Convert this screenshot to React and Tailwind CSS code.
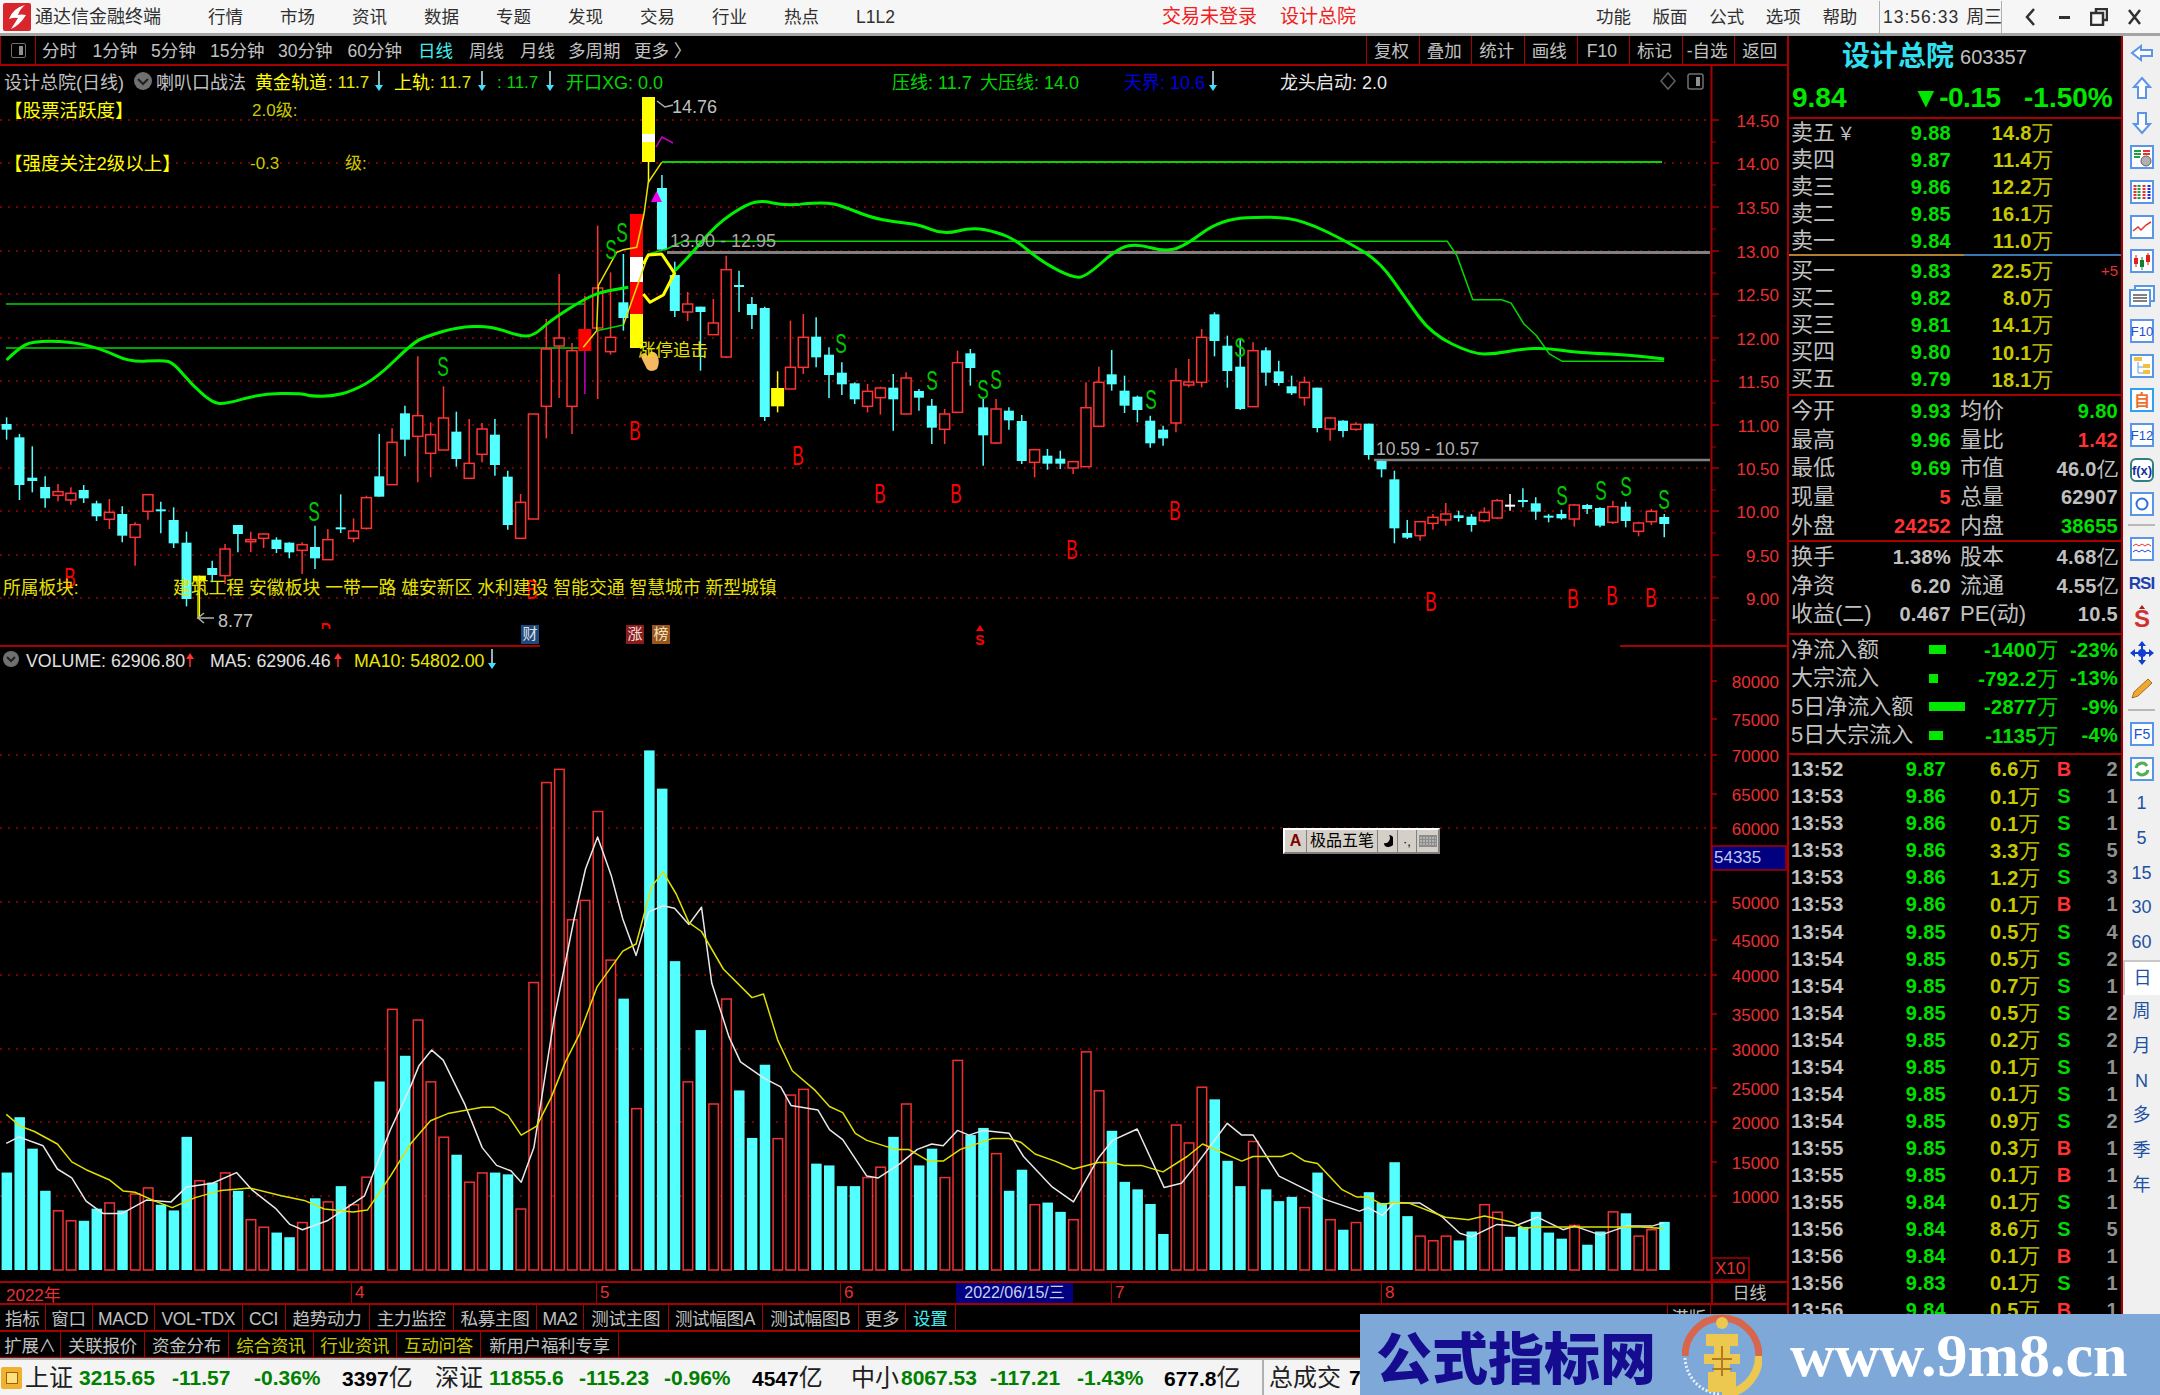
import React from 'react';

// candles: [type, high, top, bottom, low], y in crop units (page y = 200 + v / 3)
const CANDLES = [
  ['c',655,675,692,722],['c',705,715,858,903],['c',742,836,846,880],['c',832,864,898,926],['r',855,878,889,907],
  ['r',865,883,903,917],['c',858,873,898,912],['c',905,913,952,966],['r',900,940,961,990],['c',922,945,1010,1030],
  ['r',970,977,1015,1100],['r',887,887,937,962],['c',908,931,935,1003],['c',925,963,1033,1047],['c',998,1031,1200,1222],
  ['y',1130,1130,1145,1260],['c',1085,1107,1128,1150],['r',1035,1050,1130,1155],['c',978,978,1005,1060],['r',998,1022,1028,1060],
  ['r',1003,1005,1018,1047],['c',1015,1022,1050,1062],['c',1030,1031,1060,1078],['r',1030,1037,1054,1125],['c',980,1044,1078,1110],
  ['r',990,1022,1082,1082],['c',886,985,988,1002],['r',958,996,1018,1030],['r',890,896,988,992],['c',705,832,893,893],
  ['r',688,730,857,857],['c',620,643,722,772],['r',472,650,712,850],['r',670,707,763,835],['r',562,657,753,753],
  ['c',638,698,780,803],['r',660,793,838,838],['r',672,690,766,790],['c',660,707,798,830],['c',815,833,978,992],
  ['r',885,910,1018,1018],['r',645,645,960,960],['r',360,450,622,718],['r',225,417,441,597],['r',432,455,622,705],
  ['f',290,390,456,456],['r',80,267,387,600],['r',220,415,458,467],['c',165,310,357,395],null,
  null,['c',-72,-33,152,152],['c',188,228,336,354],['r',279,315,339,366],['c',323,323,339,515],
  ['r',300,372,407,407],['r',170,212,474,477],['c',215,258,263,339],['c',294,315,348,390],['c',323,327,654,666],
  ['y',517,567,622,640],['r',365,505,570,570],['r',345,415,505,525],['c',355,413,475,505],['c',445,467,528,597],
  ['c',490,521,556,588],['c',550,553,601,615],['r',555,577,622,640],['r',563,567,596,647],['c',525,566,601,695],
  ['r',520,537,645,645],['c',570,576,596,635],['c',600,620,686,735],['r',630,645,691,735],['r',455,491,640,640],
  ['c',450,463,507,560],['c',600,625,709,800],['r',600,630,732,735],['c',625,635,664,692],['c',648,666,786,795],
  ['r',750,752,790,835],['c',750,770,794,812],['c',755,779,794,810],['r',785,788,807,825],['r',550,626,803,803],
  ['r',503,550,682,685],['c',453,526,556,575],['c',530,575,620,642],['c',590,593,633,670],['c',650,665,733,746],
  ['c',680,692,718,740],['r',508,545,672,700],['r',480,549,558,565],['r',390,415,550,565],['c',340,346,426,472],
  ['c',410,440,516,566],['c',420,503,630,633],['r',430,455,623,623],['c',445,454,521,560],['c',485,517,552,560],
  ['c',530,562,583,588],['r',533,550,596,620],['c',566,566,687,700],['r',655,657,690,725],['c',664,665,696,715],
  ['r',670,676,691,695],['c',674,674,768,782],['c',785,786,811,835],['c',815,841,988,1033],['c',963,1002,1016,1020],
  ['r',968,968,1010,1025],['r',945,955,973,992],['r',912,945,963,980],['c',935,949,957,968],['c',945,953,978,998],
  ['r',925,940,965,970],['r',900,905,957,960],['w',885,917,921,935],['c',868,903,908,925],['c',895,913,938,962],
  ['c',945,950,953,970],['c',932,945,958,962],['r',915,918,960,983],['c',915,918,930,945],['c',925,927,980,985],
  ['r',905,923,970,975],['c',908,923,966,985],['r',968,972,997,1012],['r',930,937,968,978],['c',945,954,975,1015],
];

// volume bars: [type, top] with page y = 720 + v / 2.8
const VOLS = 'c1270 c1115 c1203 c1321 r1377 r1405 c1405 c1371 r1355 c1376 r1330 r1313 c1360 c1376 c1170 r1293 c1298 r1271 c1321 r1402 r1423 c1438 c1451 r1410 c1342 r1352 c1308 r1360 r1283 c1015 r813 c943 r843 r1016 r1171 c1220 r1297 r1271 c1270 c1275 r1372 r738 r178 r141 r562 r508 r259 r675 c783 r1091 c88 c195 c678 r1016 c871 r1078 r784 c1040 c1173 c968 r1175 r1053 r1037 c1245 c1250 c1308 c1308 r1284 r1255 c1170 r1078 c1250 c1203 r1284 r956 c1165 c1145 r1217 c1321 c1262 r1360 c1354 c1380 r1402 r932 r1041 c1153 c1296 c1317 c1358 c1442 r1137 r1187 r1031 c1065 c1237 c1308 r1183 c1317 c1350 c1338 r1368 c1270 r1402 c1430 r1410 c1325 c1355 c1241 c1392 r1448 r1461 r1448 c1460 c1435 r1360 r1381 c1450 c1422 c1380 c1438 c1455 r1418 c1472 c1435 r1380 c1384 r1448 r1430 c1408'.split(' ');

const MA5 = [[11,1188],[33,1170],[75,1195],[100,1260],[125,1285],[150,1350],[180,1385],[212,1385],[255,1347],[298,1352],[325,1310],[370,1300],[412,1270],[440,1320],[480,1370],[505,1415],[527,1430],[570,1405],[635,1335],[680,1150],[715,1030],[730,970],[752,927],[772,955],[810,1080],[840,1200],[865,1250],[890,1265],[908,1297],[930,1200],[965,840],[1000,560],[1020,420],[1041,330],[1065,440],[1085,560],[1108,662],[1130,540],[1155,523],[1175,530],[1200,575],[1222,527],[1240,740],[1270,890],[1290,960],[1330,1005],[1360,1030],[1378,1082],[1425,1095],[1445,1150],[1468,1178],[1510,1280],[1530,1285],[1568,1245],[1598,1205],[1623,1190],[1643,1195],[1668,1152],[1688,1165],[1713,1152],[1758,1160],[1783,1225],[1833,1310],[1870,1352],[1913,1230],[1938,1180],[1981,1148],[2028,1312],[2058,1300],[2083,1250],[2138,1132],[2163,1165],[2183,1165],[2228,1280],[2278,1320],[2308,1345],[2368,1378],[2383,1368],[2408,1390],[2428,1355],[2473,1355],[2513,1395],[2543,1440],[2563,1450],[2608,1415],[2638,1420],[2678,1395],[2723,1430],[2743,1420],[2788,1445],[2833,1420],[2878,1420],[2898,1410]];
const MA10 = [[11,1107],[35,1140],[60,1155],[100,1190],[125,1240],[150,1262],[190,1290],[215,1322],[235,1325],[270,1350],[300,1368],[340,1340],[385,1320],[435,1313],[490,1335],[530,1348],[565,1372],[615,1380],[640,1375],[680,1280],[715,1190],[750,1125],[780,1105],[840,1087],[860,1087],[885,1110],[908,1165],[935,1140],[960,1060],[985,960],[1010,880],[1040,750],[1085,650],[1108,630],[1135,470],[1155,428],[1178,490],[1200,570],[1222,595],[1260,700],[1310,780],[1330,770],[1355,900],[1380,985],[1420,1040],[1445,1085],[1468,1102],[1490,1160],[1510,1180],[1560,1205],[1583,1205],[1618,1238],[1643,1238],[1673,1205],[1728,1175],[1758,1175],[1778,1185],[1803,1218],[1838,1238],[1870,1260],[1913,1242],[1938,1242],[1958,1250],[1988,1250],[2026,1268],[2068,1225],[2095,1190],[2163,1238],[2183,1225],[2233,1225],[2250,1215],[2273,1238],[2295,1245],[2338,1318],[2363,1338],[2383,1338],[2408,1360],[2428,1353],[2453,1355],[2518,1395],[2558,1402],[2586,1392],[2633,1408],[2656,1427],[2673,1422],[2858,1422],[2898,1427]];

const pts = (list, fx, fy) => list.map(([a, b]) => `${fx(a).toFixed(1)},${fy(b).toFixed(1)}`).join(' ');
const z6x = (v) => v / 1.96;
const z7x = (v) => 800 + v / 1.568;
const zy = (v) => 200 + v / 3;
const z12x = (v) => 500 + v / 3;
const z12y = (v) => 60 + v / 3;
const vx = (v) => v / 1.742;
const vy = (v) => 720 + v / 2.8;
const cx = (i) => 6.6 + 12.85 * i;

// rounds a point list off through its segment midpoints
function smooth(str) {
  const p = str.split(' ').map((s) => s.split(',').map(Number));
  let d = `M${p[0][0]} ${p[0][1]}`;
  for (let i = 1; i < p.length - 1; i++) {
    const mx = (p[i][0] + p[i + 1][0]) / 2;
    const my = (p[i][1] + p[i + 1][1]) / 2;
    d += `Q${p[i][0]} ${p[i][1]} ${mx.toFixed(1)} ${my.toFixed(1)}`;
  }
  const last = p[p.length - 1];
  return `${d}L${last[0]} ${last[1]}`;
}

const GREEN_A = pts([[13,483],[35,450],[62,427],[135,427],[200,450],[255,490],[320,483],[340,492],[375,555],[415,610],[440,616],[510,585],[590,583],[610,592],[650,592],[690,577],[740,535],[810,430],[840,410],[895,385],[960,380],[1015,410],[1045,412]], z6x, zy)
  + ' ' + pts([[150,785],[250,722],[300,700],[385,685]], z12x, z12y);
const GREEN_B = pts([[525,635],[570,590],[650,495],[740,435],[790,425],[840,437],[900,437]], z12x, z12y)
  + ' ' + pts([[0,15],[40,10],[65,20],[110,55],[150,70],[185,75],[225,107],[270,85],[310,100],[340,125],[380,190],[430,238],[450,230],[500,145],[530,135],[570,157],[600,145],[660,60],[740,52],[790,65],[860,130],[910,190],[950,300],[990,405],[1055,465],[1090,465],[1130,450],[1170,447],[1210,458],[1240,462],[1300,468],[1355,480]], z7x, zy);
const YEL_1 = pts([[430,615],[445,588],[485,585],[522,640]], z12x, z12y);
const YEL_2 = pts([[430,705],[450,730],[490,708],[525,640]], z12x, z12y);
const THIN_Y1 = pts([[250,865],[290,815],[295,680],[350,580],[370,572],[410,565],[432,465],[445,370],[485,310]], z12x, z12y);
const THIN_Y2 = pts([[370,798],[430,630],[445,585]], z12x, z12y);
const THIN_G2 = pts([[290,815],[370,798]], z12x, z12y);
const THIN_G3 = pts([[445,585],[500,570],[550,547],[900,547]], z12x, z12y)
  + ' ' + pts([[0,127],[1015,127],[1030,170],[1055,302],[1100,302],[1115,312],[1135,375],[1155,410],[1175,465],[1195,487],[1355,487]], z7x, zy);

const S_MARKS = [[443,368],[314,513],[611,251],[622,234],[841,345],[932,382],[983,391],[996,381],[1151,401],[1240,349],[1562,497],[1601,492],[1626,488],[1664,501]];
const B_MARKS = [[70,579],[532,591],[635,432],[798,457],[880,495],[956,495],[1175,512],[1072,551],[1431,603],[1573,600],[1612,597],[1651,599]];

const PRICE_TICKS = [['14.50',121],['14.00',164],['13.50',208],['13.00',252],['12.50',295],['12.00',339],['11.50',382],['11.00',426],['10.50',469],['10.00',512],['9.50',556],['9.00',599]];
const VOL_TICKS = [['80000',682],['75000',720],['70000',756],['65000',795],['60000',829],['50000',903],['45000',941],['40000',976],['35000',1015],['30000',1050],['25000',1089],['20000',1123],['15000',1163],['10000',1197]];
const VOL_GRID = [756,829,903,976,1050,1123,1197];

const MID = 'rgb(168,0,0)';

function T({ x, y, c = '#c0c0c0', s = 17, a, b, children }) {
  return (
    <text x={x} y={Number(y) + 1.5} fill={c} fontSize={s} textAnchor={a} fontWeight={b ? 700 : 400} dominantBaseline="central">
      {children}
    </text>
  );
}

// tall narrow signal letter
function Mark({ x, y, c, children }) {
  return (
    <text transform={`translate(${x} ${y}) scale(0.72 1.12)`} fill={c} fontSize="24" textAnchor="middle" dominantBaseline="central">
      {children}
    </text>
  );
}

function DownArrow({ x, y }) {
  return (
    <g>
      <path d={`M${x} ${y - 10}V${y + 5}`} stroke="#c0f0ff" strokeWidth="1.5" />
      <path d={`M${x - 4} ${y + 4}H${x + 4}L${x} ${y + 10}Z`} fill="#40e0ff" />
    </g>
  );
}

function Candle({ d, i }) {
  if (!d) return null;
  const [t, h, o, c, l] = d;
  const x = cx(i);
  const top = zy(o);
  const bot = zy(c);
  const w = t === 'y' || t === 'f' ? 13 : 10;
  const col = { c: '#54ffff', r: '#ff3232', y: '#ffff00', f: '#ff0000', w: '#ffffff' }[t];
  const wick = t === 'f' ? '#ff3232' : col;
  return (
    <g>
      <line x1={x} x2={x} y1={zy(h)} y2={zy(l)} stroke={wick} strokeWidth="1.5" />
      {t === 'r' ? (
        <rect x={x - w / 2} y={top} width={w} height={Math.max(bot - top, 2)} fill="#000" stroke={col} strokeWidth="1.5" />
      ) : (
        <rect x={x - w / 2} y={top} width={w} height={Math.max(bot - top, 2)} fill={col} />
      )}
    </g>
  );
}

function ChartCanvas() {
  return (
    <svg className="absolute inset-0" width="1787" height="1215" viewBox="0 67 1787 1215">
      {/* dotted grid */}
      {PRICE_TICKS.map(([, y]) => (
        <line key={y} x1="0" x2="1711" y1={y} y2={y} stroke="#a00000" strokeWidth="1.5" strokeDasharray="2 6" />
      ))}
      {VOL_GRID.map((y) => (
        <line key={y} x1="0" x2="1711" y1={y} y2={y} stroke="#a00000" strokeWidth="1.5" strokeDasharray="2 6" />
      ))}

      {/* axis */}
      <line x1="1711.5" x2="1711.5" y1="67" y2="1282" stroke={MID} strokeWidth="2" />
      <line x1="0" x2="540" y1="647" y2="647" stroke={MID} strokeWidth="2" />
      <line x1="1620" x2="1787" y1="647" y2="647" stroke={MID} strokeWidth="2" />
      {PRICE_TICKS.map(([label, y]) => (
        <g key={label}>
          <line x1="1712" x2="1719" y1={y} y2={y} stroke={MID} strokeWidth="1.5" />
          <line x1="1712" x2="1716" y1={y + 22} y2={y + 22} stroke={MID} strokeWidth="1" />
          <T x="1779" y={y} c="#e83030" a="end">{label}</T>
        </g>
      ))}
      {VOL_TICKS.map(([label, y]) => (
        <g key={label}>
          <line x1="1712" x2="1717" y1={y} y2={y} stroke={MID} strokeWidth="1.5" />
          <T x="1779" y={y} c="#e83030" a="end">{label}</T>
        </g>
      ))}

      {/* horizontal levels */}
      <line x1="6" x2="584" y1="305" y2="305" stroke="#00d800" strokeWidth="1.5" />
      <line x1="6" x2="584" y1="349" y2="349" stroke="#00d800" strokeWidth="1.5" />
      <line x1="662" x2="1662" y1="163" y2="163" stroke="#00d800" strokeWidth="2" />
      <line x1="667" x2="1710" y1="253.5" y2="253.5" stroke="#808080" strokeWidth="3" />
      <line x1="1374" x2="1710" y1="461" y2="461" stroke="#808080" strokeWidth="2.5" />

      {/* candles */}
      {CANDLES.map((d, i) => <Candle key={i} d={d} i={i} />)}
      <line x1={cx(45)} x2={cx(45)} y1="352" y2="395" stroke="#c000c0" strokeWidth="1.5" />

      {/* limit-up bars */}
      <rect x="630" y="215" width="13" height="43" fill="#ff0000" />
      <rect x="630" y="258" width="13" height="25" fill="#ffffff" />
      <rect x="630" y="283" width="13" height="32" fill="#ff0000" />
      <rect x="630" y="315" width="13" height="34" fill="#ffff00" />
      <rect x="642" y="98" width="13" height="65" fill="#ffff00" />
      <rect x="642" y="135" width="13" height="8" fill="#ffffff" />
      <line x1="648.5" x2="648.5" y1="163" y2="184" stroke="#ffff00" strokeWidth="1.5" />
      <path d="M656 148l6-10 11 6" fill="none" stroke="#c000c0" strokeWidth="1.5" />
      <path d="M651 203l5.5-11 5.5 11Z" fill="#f000f0" />

      {/* indicator lines */}
      <polyline points={THIN_Y1} fill="none" stroke="#e8e000" strokeWidth="1.5" />
      <polyline points={THIN_Y2} fill="none" stroke="#e8e000" strokeWidth="1.5" />
      <polyline points={THIN_G2} fill="none" stroke="#00d800" strokeWidth="1.5" />
      <polyline points={THIN_G3} fill="none" stroke="#00d800" strokeWidth="1.5" />
      <path d={smooth(GREEN_A)} fill="none" stroke="#00f000" strokeWidth="3" />
      <path d={smooth(GREEN_B)} fill="none" stroke="#00f000" strokeWidth="3" />
      <polyline points={YEL_1} fill="none" stroke="#ffff00" strokeWidth="3" strokeLinejoin="round" />
      <polyline points={YEL_2} fill="none" stroke="#ffff00" strokeWidth="3" strokeLinejoin="round" />

      {/* low marker */}
      <line x1="198" x2="198" y1="577" y2="620" stroke="#c8c800" strokeWidth="1.5" />
      <path d="M214 619H199m5-5l-6 5 6 5" fill="none" stroke="#b0b0b0" strokeWidth="1.5" />
      <path d="M657 102l8 6 8-2" fill="none" stroke="#b0b0b0" strokeWidth="1.5" />

      {/* hand pointer */}
      <path d="M642 360q-3-6 3-6l3 3 2-4q6-1 8 5t-1 12q-6 4-10 0Z" fill="#f5b860" />

      {/* signal letters */}
      {S_MARKS.map(([x, y]) => <Mark key={`${x}-${y}`} x={x} y={y} c="#00c800">S</Mark>)}
      {B_MARKS.map(([x, y]) => <Mark key={`${x}-${y}`} x={x} y={y} c="#ff0000">B</Mark>)}
      <svg x="315" y="618" width="22" height="12">
        <Mark x={11} y={16} c="#ff0000">B</Mark>
      </svg>
      <path d="M976 632l4-6 4 6Z" fill="#ff0000" />
      <T x="980" y="639" c="#ff0000" s={14} a="middle" b>S</T>

      {/* price labels */}
      <T x="672" y="106" s={18}>14.76</T>
      <T x="218" y="620" s={18}>8.77</T>
      <T x="670" y="240" c="#a8a8a8" s={18}>13.00 - 12.95</T>
      <T x="1376" y="448" c="#b0b0b0" s={17.5}>10.59 - 10.57</T>
      <T x="638" y="349" c="#e8e000" s={17.5}>涨停追击</T>

      {/* info row */}
      <T x="4" y="82" s={18}>设计总院(日线)</T>
      <circle cx="143" cy="82" r="9" fill="#707070" />
      <path d="M138 80l5 5 5-5" fill="none" stroke="#202020" strokeWidth="2" />
      <T x="156" y="82" s={18}>喇叭口战法</T>
      <T x="255" y="82" c="#ffff00" s={18}>黄金轨道</T>
      <T x="328" y="82" c="#e8e800">: 11.7</T>
      <DownArrow x={379} y={82} />
      <T x="394" y="82" c="#ffff00" s={18}>上轨</T>
      <T x="430" y="82" c="#e8e800">: 11.7</T>
      <DownArrow x={482} y={82} />
      <T x="497" y="82" c="#00d800">: 11.7</T>
      <DownArrow x={550} y={82} />
      <T x="566" y="82" c="#00d800" s={18}>开口XG: 0.0</T>
      <T x="892" y="82" c="#00d800" s={18}>压线: 11.7</T>
      <T x="980" y="82" c="#00d800" s={18}>大压线: 14.0</T>
      <T x="1124" y="82" c="#0000e0" s={18}>天界: 10.6</T>
      <DownArrow x={1213} y={82} />
      <T x="1280" y="82" c="#e8e8e8" s={18}>龙头启动: 2.0</T>
      <path d="M1668 74l7 8-7 8-7-8Z" fill="none" stroke="#606060" strokeWidth="1.5" />
      <rect x="1688" y="75" width="15" height="15" rx="2" fill="none" stroke="#707070" strokeWidth="1.5" />
      <rect x="1696" y="78" width="4" height="9" fill="#909090" />

      {/* left rail */}
      <T x="4" y="110" c="#ffff00" s={18.5}>【股票活跃度】</T>
      <T x="252" y="110" c="#c8c800">2.0级:</T>
      <T x="4" y="163" c="#ffff00" s={18.5}>【强度关注2级以上】</T>
      <T x="250" y="163" c="#c8c800">-0.3</T>
      <T x="345" y="163" c="#c8c800">级:</T>
      <T x="3" y="587" c="#e8e000" s={17.7}>所属板块:</T>
      <T x="173" y="587" c="#e8e000" s={17.8}>建筑工程 安徽板块 一带一路 雄安新区 水利建设 智能交通 智慧城市 新型城镇</T>

      {/* event badges */}
      <rect x="521" y="626" width="18" height="19" fill="#1f4a80" />
      <T x="530" y="633" c="#e0e0e0" s={15} a="middle">财</T>
      <rect x="626" y="626" width="18" height="19" fill="#8c1c1c" />
      <T x="635" y="633" c="#f0e0e0" s={15} a="middle">涨</T>
      <rect x="652" y="626" width="18" height="19" fill="#96561c" />
      <T x="661" y="633" c="#f0e0c0" s={15} a="middle">榜</T>

      {/* volume */}
      {VOLS.map((v, i) => {
        const top = vy(Number(v.slice(1)));
        const x = cx(i);
        return v[0] === 'c' ? (
          <rect key={i} x={x - 5} y={top} width="10.5" height={1271 - top} fill="#54ffff" />
        ) : (
          <rect key={i} x={x - 4.5} y={top} width="9.5" height={1271 - top} fill="#000" stroke="#f03030" strokeWidth="1.5" />
        );
      })}
      <polyline points={pts(MA5, vx, vy)} fill="none" stroke="#e8e8e8" strokeWidth="1.5" strokeLinejoin="round" />
      <polyline points={pts(MA10, vx, vy)} fill="none" stroke="#e0e000" strokeWidth="1.5" strokeLinejoin="round" />

      {/* volume legend */}
      <circle cx="11" cy="660" r="8" fill="#707070" />
      <path d="M7 658l4 4 4-4" fill="none" stroke="#202020" strokeWidth="2" />
      <T x="26" y="660" c="#e0e0e0" s={17.8}>VOLUME: 62906.80</T>
      <path d="M190 654l-4 6h8Z" fill="#ff3030" />
      <line x1="190" x2="190" y1="658" y2="668" stroke="#ff3030" strokeWidth="1.5" />
      <T x="210" y="660" c="#e0e0e0" s={17.8}>MA5: 62906.46</T>
      <path d="M338 654l-4 6h8Z" fill="#ff3030" />
      <line x1="338" x2="338" y1="658" y2="668" stroke="#ff3030" strokeWidth="1.5" />
      <T x="354" y="660" c="#e8e800" s={17.8}>MA10: 54802.00</T>
      <DownArrow x={492} y={660} />

      {/* floating value on axis */}
      <rect x="1712" y="847" width="74" height="24" fill="#000080" stroke={MID} strokeWidth="1.5" />
      <T x="1714" y="857" c="#c0c8f0">54335</T>
      <rect x="1712" y="1259" width="37" height="22" fill="#000" stroke={MID} strokeWidth="1.5" />
      <T x="1715" y="1268" c="#e83030">X10</T>
    </svg>
  );
}

function ImeBar() {
  return (
    <div className="absolute left-[1283px] top-[762px] flex h-[26px] w-[157px] items-center border-2 border-t-white border-l-white border-r-[#808080] border-b-[#808080] bg-[#d4d0c8] text-[16px] text-black">
      <span className="flex h-full w-[22px] items-center justify-center border-r border-[#808080] font-bold text-[#800000]">A</span>
      <span className="flex h-full w-[71px] items-center justify-center border-r border-[#808080]">极品五笔</span>
      <span className="flex h-full w-[20px] items-center justify-center border-r border-[#808080]">
        <svg width="10" height="14"><path d="M6 1a6 6 0 0 1-1 12Q1 13 1 9q3 1 5-2t0-6Z" fill="#000" /></svg>
      </span>
      <span className="flex h-full w-[19px] items-center justify-center border-r border-[#808080] text-[13px]">·,</span>
      <span className="flex h-full flex-1 items-center justify-center">
        <svg width="18" height="12"><rect width="18" height="12" fill="#8c8c8c" /><path d="M1 3h16M1 6h16M1 9h16" stroke="#d8d8d8" strokeDasharray="2 1" /></svg>
      </span>
    </div>
  );
}

const MENU = ['行情', '市场', '资讯', '数据', '专题', '发现', '交易', '行业', '热点', 'L1L2'];
const MENU_R = ['功能', '版面', '公式', '选项', '帮助'];

function TitleBar() {
  return (
    <div className="flex h-[36px] items-center border-b-[3px] border-[#a4a4a4] bg-[#f6f6f6] pt-[1px] text-[17.5px] text-[#303030]">
      <div className="flex w-[208px] items-center">
        <svg className="ml-[3px]" width="28" height="28" viewBox="0 0 28 28">
          <rect width="28" height="28" rx="2" fill="#d8262c" />
          <path d="M22 2Q10 5 6 16q5-2 9-1l-7 11q9-4 15-14-5-1-8 0 2-6 7-10Z" fill="#fff" />
        </svg>
        <span className="ml-[4px] text-[18px]">通达信金融终端</span>
      </div>
      <div className="flex w-[720px]">
        {MENU.map((m) => <span key={m} className="w-[72px]">{m}</span>)}
      </div>
      <div className="ml-[234px] flex w-[194px] gap-[23px] text-[19px] text-[#f02020]">
        <span>交易未登录</span>
        <span>设计总院</span>
      </div>
      <div className="ml-[240px] flex w-[283px]">
        {MENU_R.map((m) => <span key={m} className="w-[57px]">{m}</span>)}
      </div>
      <div className="flex h-full w-[123px] items-center gap-[7px] whitespace-nowrap border-x border-[#b0b0b0] pl-[3px]">
        <span className="tracking-[1px]">13:56:33</span>
        <span className="text-[18px]">周三</span>
      </div>
      <div className="flex flex-1 items-center text-[#202020]">
        <svg className="ml-[22px]" width="12" height="20"><path d="M10 2L3 10l7 8" fill="none" stroke="#303030" strokeWidth="2.5" /></svg>
        <span className="ml-[23px] h-[3px] w-[11px] bg-[#303030]" />
        <svg className="ml-[20px]" width="18" height="18"><path d="M6 5V1h11v11h-4M1 5h12v12H1Z" fill="none" stroke="#303030" strokeWidth="2.5" /></svg>
        <svg className="ml-[19px]" width="15" height="18"><path d="M2 2l11 14M13 2L2 16" stroke="#303030" strokeWidth="2.5" /></svg>
      </div>
    </div>
  );
}

const PERIODS = [['分时',50.5],['1分钟',58.5],['5分钟',59],['15分钟',68],['30分钟',69.5],['60分钟',70.5],['日线',51,true],['周线',51],['月线',48],['多周期',66],['更多 〉',50]];
const TOOLS = ['复权', '叠加', '统计', '画线', 'F10', '标记', '-自选', '返回'];

function Toolbar() {
  return (
    <div className="flex h-[31px] items-center border-b-2 border-[#a80000] text-[17.5px] text-[#c0c0c0]">
      <div className="flex h-full w-[36px] items-center justify-center border-x border-[#a80000]">
        <span className="flex h-[15px] w-[15px] items-center justify-end rounded-[2px] border border-[#707070] pr-[2px]">
          <span className="h-[9px] w-[4px] bg-[#909090]" />
        </span>
      </div>
      <div className="ml-[6px] flex pt-[2px]">
        {PERIODS.map(([p, w, on]) => (
          <span key={p} style={{ width: w }} className={`whitespace-nowrap ${on ? 'text-[#40f0f0]' : ''}`}>{p}</span>
        ))}
      </div>
      <div className="ml-auto flex h-full">
        {TOOLS.map((t) => (
          <span key={t} className="flex w-[52.6px] items-center justify-center border-l border-[#a80000] pr-[3px] pt-[2px]">{t}</span>
        ))}
      </div>
    </div>
  );
}

const MONTHS = [['4',351],['5',596],['6',840],['7',1111],['8',1381]];

function DateAxis() {
  return (
    <div className="flex h-[24px] border-y-2 border-[#a80000] text-[17px] text-[#e83030]">
      <span className="ml-[6px] w-[345px]">2022年</span>
      {MONTHS.slice(0, 3).map(([m], i) => (
        <span key={m} style={{ width: i === 0 ? 245 : i === 1 ? 244 : 116 }} className="border-l border-[#a80000] pl-[3px] leading-[20px]">{m}</span>
      ))}
      <span className="flex w-[117px] items-center justify-center bg-[#000080] text-[16px] text-[#c8d0f0]">2022/06/15/三</span>
      <span className="w-[38px]" />
      <span className="w-[270px] border-l border-[#a80000] pl-[3px] leading-[20px]">7</span>
      <span className="w-[330px] border-l border-[#a80000] pl-[3px] leading-[20px]">8</span>
      <span className="flex w-[75px] items-center justify-center border-l-2 border-[#a80000] text-[#c0c0c0]">日线</span>
    </div>
  );
}

const TABS_A = [['指标',45.5],['窗口',47],['MACD',62.5],['VOL-TDX',87.5],['CCI',43],['趋势动力',84],['主力监控',84.5],['私募主图',83],['MA2',47],['测试主图',84.5],['测试幅图A',94],['测试幅图B',96.5],['更多',47],['设置',49.5,'text-[#40f0f0]']];
const TABS_B = [['扩展∧',61],['关联报价',84],['资金分布',84],['综合资讯',84.5,'text-[#c8c800]'],['行业资讯',83.5,'text-[#c8c800]'],['互动问答',84,'text-[#c8c800]'],['新用户福利专享',138]];

function TabRow({ tabs, right }) {
  return (
    <div className="flex h-[27px] border-b-2 border-[#a80000] text-[17.5px] tracking-[-0.3px] text-[#c0c0c0]">
      {tabs.map(([t, w, cls]) => (
        <span key={t} style={{ width: w }} className={`flex items-center justify-center whitespace-nowrap border-r border-[#a80000] pt-[3px] ${cls || ''}`}>{t}</span>
      ))}
      {right}
    </div>
  );
}

const ASKS = [['卖五','9.88','14.8'],['卖四','9.87','11.4'],['卖三','9.86','12.2'],['卖二','9.85','16.1'],['卖一','9.84','11.0']];
const BIDS = [['买一','9.83','22.5'],['买二','9.82','8.0'],['买三','9.81','14.1'],['买四','9.80','10.1'],['买五','9.79','18.1']];
const STATS_A = [
  ['今开','9.93','text-[#00e000]','均价','9.80','text-[#00e000]'],
  ['最高','9.96','text-[#00e000]','量比','1.42','text-[#ff3232]'],
  ['最低','9.69','text-[#00e000]','市值','46.0亿','text-[#c0c0c0]'],
  ['现量','5','text-[#ff3232]','总量','62907','text-[#c0c0c0]'],
  ['外盘','24252','text-[#ff3232]','内盘','38655','text-[#00e000]'],
];
const STATS_B = [
  ['换手','1.38%','text-[#c0c0c0]','股本','4.68亿','text-[#c0c0c0]'],
  ['净资','6.20','text-[#c0c0c0]','流通','4.55亿','text-[#c0c0c0]'],
  ['收益(二)','0.467','text-[#c0c0c0]','PE(动)','10.5','text-[#c0c0c0]'],
];
const FLOWS = [['净流入额',17,'-1400','-23%'],['大宗流入',9,'-792.2','-13%'],['5日净流入额',36,'-2877','-9%'],['5日大宗流入',14,'-1135','-4%']];
const TICKS = [
  ['13:52','9.87','6.6','B',2],['13:53','9.86','0.1','S',1],['13:53','9.86','0.1','S',1],['13:53','9.86','3.3','S',5],
  ['13:53','9.86','1.2','S',3],['13:53','9.86','0.1','B',1],['13:54','9.85','0.5','S',4],['13:54','9.85','0.5','S',2],
  ['13:54','9.85','0.7','S',1],['13:54','9.85','0.5','S',2],['13:54','9.85','0.2','S',2],['13:54','9.85','0.1','S',1],
  ['13:54','9.85','0.1','S',1],['13:54','9.85','0.9','S',2],['13:55','9.85','0.3','B',1],['13:55','9.85','0.1','B',1],
  ['13:55','9.84','0.1','S',1],['13:56','9.84','8.6','S',5],['13:56','9.84','0.1','B',1],['13:56','9.83','0.1','S',1],
  ['13:56','9.84','0.5','B',1],
];

const NUM = "font-['Liberation_Sans'] text-[20px] font-bold tracking-[0.3px]";

function Wan() {
  return <span className="text-[21px] font-normal">万</span>;
}

function QuoteRow({ label, price, vol, extra }) {
  return (
    <div className="flex h-[27.1px] items-center pl-[2px]">
      <span className="w-[100px] text-[22px] leading-none text-[#c0c0c0]">{label}</span>
      <span className={`w-[60px] text-right text-[#00e000] ${NUM}`}>{price}</span>
      <span className={`w-[102px] text-right text-[#c8c800] ${NUM}`}>{vol}<Wan /></span>
      <span className="w-[65px] text-right text-[15px] text-[#e83030]">{extra}</span>
    </div>
  );
}

function StatRow({ row }) {
  const [a, b, bc, c, d, dc] = row;
  return (
    <div className="flex h-[28.6px] items-center pl-[2px]">
      <span className="w-[100px] whitespace-nowrap text-[22px] leading-none text-[#c0c0c0]">{a}</span>
      <span className={`w-[60px] text-right ${NUM} ${bc}`}>{b}</span>
      <span className="ml-[9px] w-[60px] whitespace-nowrap text-[22px] leading-none text-[#c0c0c0]">{c}</span>
      <span className={`w-[98px] whitespace-nowrap text-right ${NUM} ${dc}`}>{d.replace('亿', '')}{d.includes('亿') && <span className="text-[21px] font-normal">亿</span>}</span>
    </div>
  );
}

function RightPanel() {
  return (
    <div className="flex h-full w-[336px] flex-col overflow-hidden border-x-2 border-[#a80000] bg-black">
      <div className="flex h-[42px] shrink-0 items-center pl-[53px]">
        <span className="text-[28px] font-bold leading-none text-[#30e0f0]">设计总院</span>
        <span className="ml-[6px] text-[20px] text-[#c0c0c0]">603357</span>
      </div>
      <div className="flex h-[41px] shrink-0 items-center border-b-2 border-[#a80000] pl-[3px] font-['Liberation_Sans'] text-[28px] font-bold text-[#00e800]">
        <span className="w-[120px]">9.84</span>
        <span className="w-[112px] whitespace-nowrap tracking-[-0.5px]">▼-0.15</span>
        <span>-1.50%</span>
      </div>
      {ASKS.map(([l, p, v], i) => (
        <QuoteRow key={l} label={i === 0 ? <>{l}<span className="ml-[2px] text-[18px]">￥</span></> : l} price={p} vol={v} />
      ))}
      <div className="flex h-[2px] shrink-0">
        <span className="w-[175px] bg-[#b08030]" />
        <span className="flex-1 bg-[#3878b0]" />
      </div>
      <div className="h-[1px] shrink-0" />
      {BIDS.map(([l, p, v], i) => (
        <QuoteRow key={l} label={l} price={p} vol={v} extra={i === 0 ? '+5' : ''} />
      ))}
      <div className="mb-[1px] mt-[1px] h-[2px] shrink-0 bg-[#a80000]" />
      {STATS_A.map((r) => <StatRow key={r[0]} row={r} />)}
      <div className="mb-[1px] h-[2px] shrink-0 bg-[#a80000]" />
      {STATS_B.map((r) => <StatRow key={r[0]} row={r} />)}
      <div className="mb-[1px] mt-[4px] h-[2px] shrink-0 bg-[#a80000]" />
      {FLOWS.map(([l, w, v, p]) => (
        <div key={l} className="flex h-[28.5px] shrink-0 items-center pl-[2px]">
          <span className="w-[138px] whitespace-nowrap text-[22px] leading-none text-[#c0c0c0]">{l}</span>
          <span className="w-[40px]"><span style={{ width: w }} className="block h-[9px] bg-[#00e800]" /></span>
          <span className={`w-[89px] whitespace-nowrap text-right text-[#00e000] ${NUM}`}>{v}<Wan /></span>
          <span className={`w-[60px] text-right text-[#00e000] ${NUM}`}>{p}</span>
        </div>
      ))}
      <div className="mb-[1px] mt-[3px] h-[2px] shrink-0 bg-[#a80000]" />
      {TICKS.map(([t, p, v, k, n], i) => (
        <div key={i} className="flex h-[27.05px] shrink-0 items-center pl-[2px]">
          <span className={`w-[100px] text-[#c0c0c0] ${NUM}`}>{t}</span>
          <span className={`w-[55px] text-right text-[#00e000] ${NUM}`}>{p}</span>
          <span className={`w-[94px] text-right text-[#c8c800] ${NUM}`}>{v}<Wan /></span>
          <span className={`w-[48px] text-center ${NUM} ${k === 'B' ? 'text-[#ff3232]' : 'text-[#00d800]'}`}>{k}</span>
          <span className={`w-[30px] text-right text-[#909090] ${NUM}`}>{n}</span>
        </div>
      ))}
    </div>
  );
}

function Frame({ children, cls = 'stroke-[#5a96e8]' }) {
  return (
    <svg width="24" height="24" viewBox="0 0 24 24" className={cls}>
      <rect x="1" y="1" width="22" height="22" fill="#fff" strokeWidth="2" />
      {children}
    </svg>
  );
}

const SIDE_A = [
  <svg key="l" width="24" height="18"><path d="M2 9l9-7v4h11v6H11v4Z" fill="#fff" stroke="#5a96e8" strokeWidth="2" /></svg>,
  <svg key="u" width="20" height="24"><path d="M10 2l8 9h-4v11H6V11H2Z" fill="#fff" stroke="#5a96e8" strokeWidth="2" /></svg>,
  <svg key="d" width="20" height="24"><path d="M10 22l8-9h-4V2H6v11H2Z" fill="#fff" stroke="#5a96e8" strokeWidth="2" /></svg>,
  <Frame key="a"><path d="M4 6h7M4 9h7M4 12h6" stroke="#20a040" strokeWidth="2" /><path d="M13 6h7M13 9h7" stroke="#e83030" strokeWidth="2" /><circle cx="16" cy="16" r="5" fill="#b0b0b0" stroke="#606060" /></Frame>,
  <Frame key="b"><path d="M5 5v14" stroke="#e83030" strokeWidth="3" strokeDasharray="2 1" /><path d="M9 5v14" stroke="#20a040" strokeWidth="3" strokeDasharray="2 1" /><path d="M14 5v14" stroke="#e83030" strokeWidth="3" strokeDasharray="2 1" /><path d="M19 5v14" stroke="#2030e0" strokeWidth="3" strokeDasharray="2 1" /></Frame>,
  <Frame key="c"><path d="M3 16l5-4 3 3 5-5 5-3" fill="none" stroke="#e83030" strokeWidth="1.5" /></Frame>,
  <Frame key="d2"><path d="M6 6v12M18 4v12" stroke="#d02020" /><path d="M12 8v13" stroke="#108030" /><rect x="4" y="9" width="4" height="6" fill="#e02020" stroke="none" /><rect x="10" y="11" width="4" height="7" fill="#108030" stroke="none" /><rect x="16" y="6" width="4" height="7" fill="#e02020" stroke="none" /></Frame>,
  <svg key="e" width="26" height="24"><rect x="6" y="2" width="19" height="15" fill="#fff" stroke="#5a96e8" strokeWidth="2" /><rect x="1" y="6" width="20" height="16" fill="#fff" stroke="#5a96e8" strokeWidth="2" /><path d="M4 11h14M4 14h14M4 17h14" stroke="#808080" strokeWidth="2" /></svg>,
  <Frame key="f"><text x="12" y="17" fontSize="13" fill="#2050d0" stroke="none" textAnchor="middle">F10</text></Frame>,
  <Frame key="g"><path d="M8 8v11h6M8 13h6" fill="none" stroke="#60a0e0" /><rect x="4" y="3" width="8" height="4" fill="#f0c040" stroke="none" /><rect x="13" y="10" width="7" height="4" fill="#f0c040" stroke="none" /><rect x="13" y="16" width="7" height="4" fill="#f0c040" stroke="none" /></Frame>,
  <svg key="h" width="24" height="24" viewBox="0 0 24 24"><rect x="1" y="1" width="22" height="22" fill="#fff" stroke="#30a0f0" strokeWidth="2" /><text x="12" y="18" fontSize="16" fill="#f07030" textAnchor="middle" fontWeight="700">自</text></svg>,
  <Frame key="i"><text x="12" y="17" fontSize="13" fill="#2050d0" stroke="none" textAnchor="middle">F12</text></Frame>,
  <svg key="j" width="24" height="24" viewBox="0 0 24 24"><rect x="1" y="1" width="22" height="22" rx="5" fill="#fff" stroke="#308080" strokeWidth="2" /><text x="12" y="17" fontSize="13" fill="#1030a0" textAnchor="middle" fontWeight="700">f(x)</text></svg>,
  <Frame key="k"><circle cx="12" cy="12" r="5.5" fill="none" stroke="#3070d0" strokeWidth="2" /></Frame>,
];
const SIDE_B = [
  <Frame key="a"><path d="M3 9l3-2 3 2 3-2 3 2 3-2 3 2" fill="none" stroke="#e83030" /><path d="M3 15l3-2 3 2 3-2 3 2 3-2 3 2" fill="none" stroke="#3040d0" /></Frame>,
  <span key="b" className="text-[17px] font-bold tracking-[-1px] text-[#2040b0]">RSI</span>,
  <svg key="c" width="20" height="26"><text x="10" y="22" fontSize="24" fill="#d03030" textAnchor="middle" fontWeight="700">S</text><path d="M10 0l3 4h-6Z" fill="#a02020" /></svg>,
  <svg key="d" width="24" height="24" fill="#1040d0"><path d="M12 0l4 5h-8ZM12 24l4-5h-8ZM0 12l5-4v8ZM24 12l-5-4v8Z" /><circle cx="12" cy="12" r="4" /><path d="M12 4v16M4 12h16" stroke="#1040d0" strokeWidth="2" /></svg>,
  <svg key="e" width="24" height="24"><path d="M4 16L18 3l4 4L8 20l-6 2Z" fill="#f0a830" stroke="#a07020" /></svg>,
];
const SIDE_C = [
  <Frame key="a"><text x="12" y="17" fontSize="14" fill="#2050d0" stroke="none" textAnchor="middle">F5</text></Frame>,
  <Frame key="b"><path d="M6 11a6 6 0 0 1 11-2M18 13a6 6 0 0 1-11 2" fill="none" stroke="#50b050" strokeWidth="3" /></Frame>,
];
const SIDE_TXT = ['1', '5', '15', '30', '60', '日', '周', '月', 'N', '多', '季', '年'];

function Sidebar() {
  const Cell = ({ children, on }) => (
    <div className={`flex h-[34.7px] shrink-0 items-center justify-center ${on ? 'border-2 border-r-0 border-b-0 border-[#c8c8c8] bg-white' : ''}`}>{children}</div>
  );
  return (
    <div className="flex h-full flex-1 flex-col overflow-hidden bg-[#f0f0f0] text-[18px] text-[#2050a0]">
      {SIDE_A.map((n, i) => <Cell key={i}>{n}</Cell>)}
      <div className="mx-[5px] mb-[6px] mt-[2px] h-[2px] shrink-0 bg-[#b8b8b8]" />
      {SIDE_B.map((n, i) => <Cell key={i}>{n}</Cell>)}
      <div className="mx-[5px] mb-[6px] mt-[4px] h-[2px] shrink-0 bg-[#b8b8b8]" />
      {SIDE_C.map((n, i) => <Cell key={i}>{n}</Cell>)}
      {SIDE_TXT.map((t) => <Cell key={t} on={t === '日'}>{t}</Cell>)}
    </div>
  );
}

// name, values, then the width of each column
const IDX = [
  ['上证','3215.65','-11.57','-0.36%','3397',[54,93,82,88,93]],
  ['深证','11855.6','-115.23','-0.96%','4547',[54,90,85,88,99]],
  ['中小','8067.53','-117.21','-1.43%','677.8',[50,89,87,87,98]],
];

function StatusBar() {
  return (
    <div className="flex h-[37px] items-center overflow-hidden border-t-2 border-[#b0b0b0] bg-[#f4f4f4] text-[21px] font-bold text-[#008000]">
      <span className="ml-[1px] flex h-[22px] w-[21px] shrink-0 items-center justify-center rounded-[2px] bg-[#f0b030]">
        <span className="h-[12px] w-[12px] border border-[#a06000] bg-[#ffe080]" />
      </span>
      <div className="ml-[3px] flex items-center whitespace-nowrap">
        {IDX.map(([n, a, b, c, d, w]) => (
          <React.Fragment key={n}>
            <span style={{ width: w[0] }} className="text-[24px] font-normal text-[#202020]">{n}</span>
            <span style={{ width: w[1] }}>{a}</span>
            <span style={{ width: w[2] }}>{b}</span>
            <span style={{ width: w[3] }}>{c}</span>
            <span style={{ width: w[4] }} className="text-black">{d}<span className="text-[24px] font-normal text-[#202020]">亿</span></span>
          </React.Fragment>
        ))}
      </div>
      <span className="flex h-full items-center border-l-2 border-[#b0b0b0] pl-[5px] text-[24px] font-normal text-[#202020]">总成交</span>
      <span className="ml-[8px] text-black">7</span>
    </div>
  );
}

function Watermark() {
  return (
    <div className="absolute bottom-0 right-0 flex h-[81px] w-[800px] items-center bg-[#7ea8d8]">
      <span className="ml-[16px] w-[290px] whitespace-nowrap font-['Noto_Sans_CJK_SC'] text-[56px] font-black leading-none text-[#150c90]">公式指标网</span>
      <svg className="ml-[16px]" width="80" height="81" viewBox="0 0 80 81">
        <path d="M3 42A37 38 0 0 1 77 42" fill="none" stroke="#d8664c" strokeWidth="7" />
        <path d="M77 42A37 38 0 0 1 40 80" fill="none" stroke="#ecc850" strokeWidth="8" />
        <path d="M3 44A37 38 0 0 0 38 80" fill="none" stroke="#e8f0f8" strokeWidth="3" strokeDasharray="2 2" />
        <path d="M24 20h32v12h-8v8h10v10h-10v8h6v20H26V58h6v-8H22V40h10v-8h-8Z" fill="#ecc850" />
        <circle cx="40" cy="9" r="6" fill="#ecc850" />
        <path d="M40 32v30M30 45h20M30 55h20" stroke="#b07a20" strokeWidth="2" />
      </svg>
      <span className="ml-[28px] whitespace-nowrap font-['Liberation_Serif'] text-[62px] font-bold leading-none text-white">www.9m8.cn</span>
    </div>
  );
}

export default function App() {
  return (
    <div className="relative flex h-[1395px] w-[2160px] flex-col overflow-hidden bg-black font-['Liberation_Sans','Noto_Sans_CJK_SC',sans-serif]">
      <TitleBar />
      <div className="flex min-h-0 flex-1">
        <div className="flex w-[1787px] shrink-0 flex-col">
          <Toolbar />
          <div className="relative h-[1215px] shrink-0">
            <ChartCanvas />
            <ImeBar />
          </div>
          <DateAxis />
          <TabRow tabs={TABS_A} right={<span className="ml-[711px] flex w-[44px] items-center justify-center border-x border-[#a80000] text-[#c0c0c0]">港版</span>} />
          <TabRow tabs={TABS_B} />
        </div>
        <RightPanel />
        <Sidebar />
      </div>
      <StatusBar />
      <Watermark />
    </div>
  );
}
